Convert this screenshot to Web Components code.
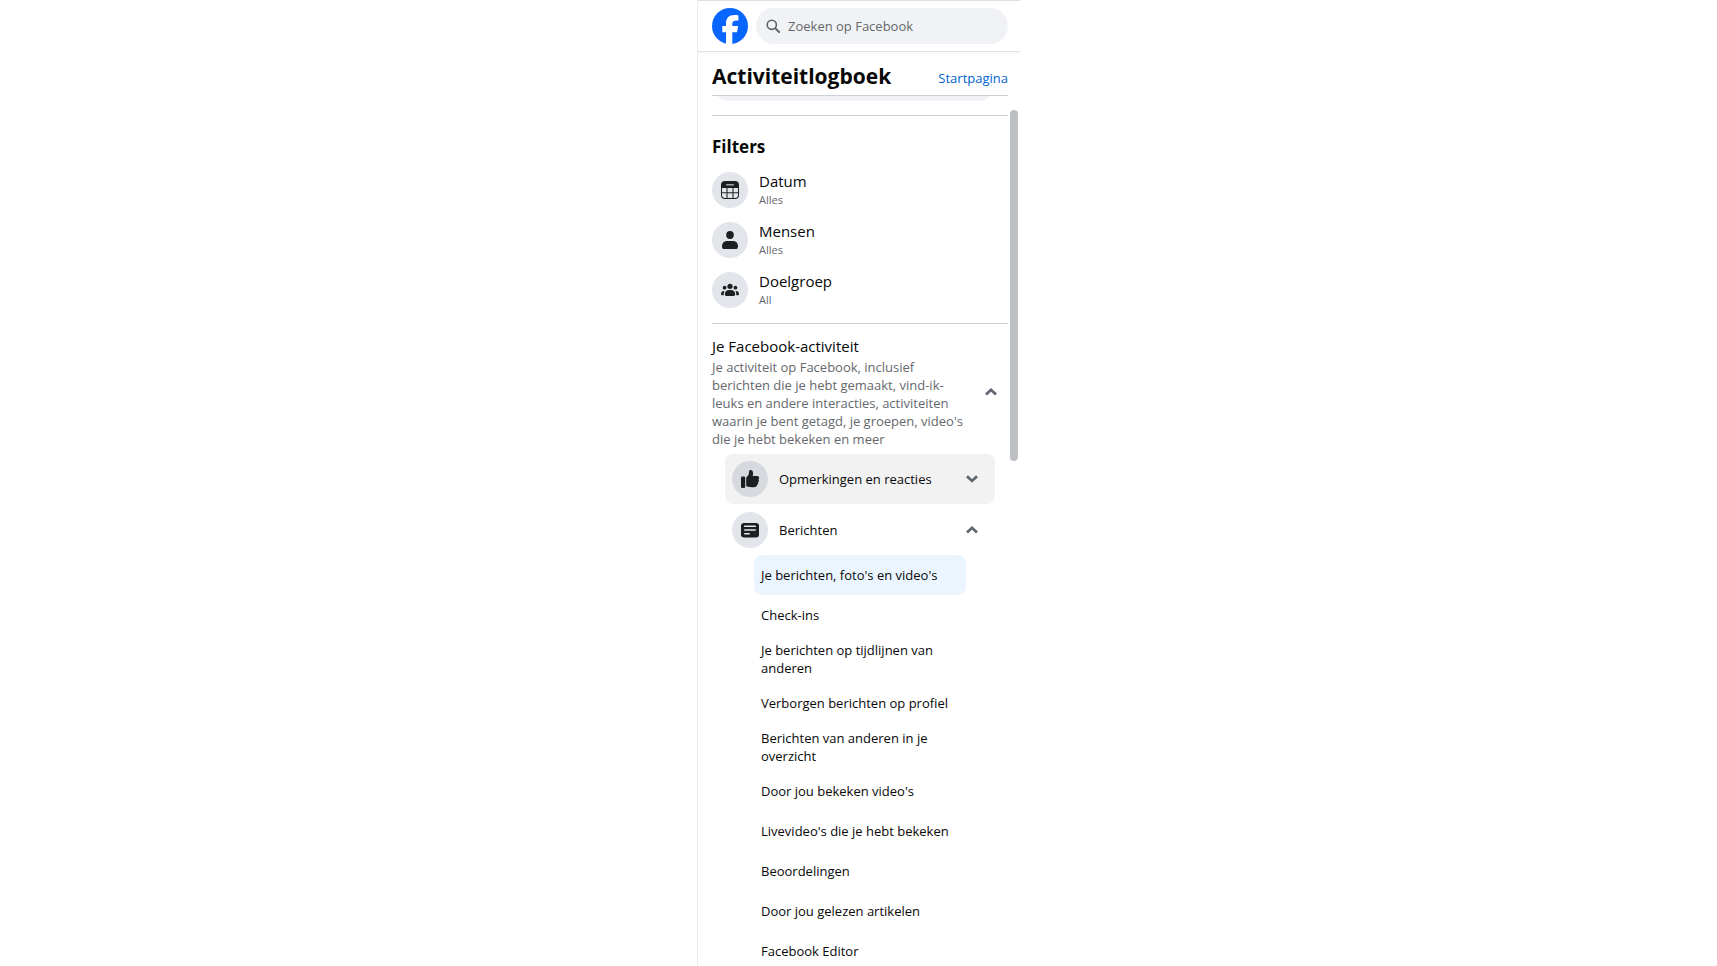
<!DOCTYPE html>
<html lang="nl">
<head>
<meta charset="utf-8">
<meta name="viewport" content="width=device-width, initial-scale=1">
<title>Activiteitlogboek</title>
<style>
  body {
    margin: 0;
    background: #fff;
    color: #080809;
    font-family: "Open Sans", "Noto Sans", sans-serif;
    font-size: 13px;
    line-height: 18px;
    --gray: #65686c;
    --line: #ced0d4;
    --circle: #e2e5e9;
    --icon: #1c1e21;
  }
</style>
</head>
<body>
<activity-app>
  <top-bar slot="top"></top-bar>
  <page-title slot="title" href="#start" link="Startpagina">Activiteitlogboek</page-title>

  <filter-group heading="Filters">
    <filter-row icon="calendar" value="Alles">Datum</filter-row>
    <filter-row icon="person" value="Alles">Mensen</filter-row>
    <filter-row icon="group" value="All">Doelgroep</filter-row>
  </filter-group>

  <activity-section heading="Je Facebook-activiteit">
    <span slot="description">Je activiteit op Facebook, inclusief berichten die je hebt gemaakt, vind-ik-leuks en andere interacties, activiteiten waarin je bent getagd, je groepen, video's die je hebt bekeken en meer</span>
    <category-item icon="like" label="Opmerkingen en reacties" hovered></category-item>
    <category-item icon="post" label="Berichten" open>
      <sub-item selected>Je berichten, foto's en video's</sub-item>
      <sub-item>Check-ins</sub-item>
      <sub-item>Je berichten op tijdlijnen van anderen</sub-item>
      <sub-item>Verborgen berichten op profiel</sub-item>
      <sub-item>Berichten van anderen in je overzicht</sub-item>
      <sub-item>Door jou bekeken video's</sub-item>
      <sub-item>Livevideo's die je hebt bekeken</sub-item>
      <sub-item>Beoordelingen</sub-item>
      <sub-item>Door jou gelezen artikelen</sub-item>
      <sub-item>Facebook Editor</sub-item>
    </category-item>
  </activity-section>
</activity-app>

<script>
const RESET = `
  * { box-sizing: border-box; }
  button {
    margin: 0;
    padding: 0;
    border: 0;
    background: none;
    color: inherit;
    font: inherit;
    text-align: left;
    cursor: pointer;
  }
  a { color: inherit; text-decoration: none; }
  h1, h2, h3, p { margin: 0; }
`;

const ICONS = {
  calendar: `
    <rect x="1" y="1" width="18" height="18" rx="4"/>
    <rect x="6" y="4" width="8" height="1.4" rx=".7" fill="#a5a8ac"/>
    <g fill="var(--circle)">
      <path d="M2 8h4.500v4.300H2z"/><path d="M7.500 8h5v4.300h-5z"/><path d="M13.500 8H18v4.300h-4.500z"/>
      <path d="M2 13.300h4.500V18H5a3 3 0 0 1-3-3z"/>
      <path d="M7.500 13.300h5V18h-5z"/>
      <path d="M13.500 13.300H18V15a3 3 0 0 1-3 3h-1.500z"/>
    </g>`,
  person: `
    <ellipse cx="10" cy="5" rx="3.8" ry="4.1"/>
    <path d="M7 11h6c3 0 5 2.200 5 5.400 0 1.600-.9 2.600-2.500 2.600h-11C2.900 19 2 18 2 16.400 2 13.200 4 11 7 11z"/>`,
  group: `
    <circle cx="10" cy="6.300" r="2.600"/>
    <circle cx="4.600" cy="7.700" r="1.900"/>
    <circle cx="15.400" cy="7.700" r="1.900"/>
    <path d="M9 10h2c2.600 0 4.200 1.800 4.200 4.200 0 1.200-.7 1.800-1.800 1.800H6.600c-1.100 0-1.800-.6-1.800-1.800C4.800 11.800 6.400 10 9 10z"/>
    <path d="M4.600 10.900C3.900 11.900 3.600 13 3.700 15.300H2.300c-.9 0-1.300-.6-1.300-1.500 0-1.800 1.400-3.100 3.600-2.900z"/>
    <path d="M15.400 10.900c.7 1 1 2.100.9 4.400h1.400c.9 0 1.300-.6 1.300-1.500 0-1.800-1.400-3.100-3.600-2.900z"/>`,
  like: `
    <rect x="1" y="7.500" width="4.200" height="11.500" rx="1.300"/>
    <path d="M6.200 17V9.400c0-.8.300-1.400.9-1.900C8.400 6.400 9 4.900 9 2.900 9 1.700 9.700 1 10.700 1c1.500 0 2.400 1.300 2.400 3.200 0 1.100-.2 2-.5 2.900H17c1.300 0 2.100.8 2.100 1.800 0 .7-.3 1.200-.8 1.500.4.400.6.800.6 1.300 0 .7-.4 1.300-1 1.600.2.300.3.600.3 1 0 .7-.4 1.300-1.100 1.500.1.900-.5 1.900-1.800 2.100-2.500.4-5.200.3-7.300-.2-1.100-.2-1.800-.5-1.800-.7z"/>`,
  post: `
    <rect x="1" y="3" width="18" height="14.500" rx="3"/>
    <g fill="var(--circle)">
      <rect x="4" y="5.600" width="12" height="1.500" rx=".7"/>
      <rect x="4" y="9.300" width="12" height="1.500" rx=".7"/>
      <rect x="4" y="13" width="6" height="1.500" rx=".7"/>
    </g>`
};

class IconCircle extends HTMLElement {
  constructor() {
    super();
    this.attachShadow({ mode: 'open' }).innerHTML = `
      <style>
        :host {
          display: flex;
          flex: none;
          align-items: center;
          justify-content: center;
          width: 36px;
          height: 36px;
          border-radius: 50%;
          background: var(--circle);
        }
        svg { width: 20px; height: 20px; fill: var(--icon); }
      </style>
      <svg viewBox="0 0 20 20" aria-hidden="true">${ICONS[this.getAttribute('name')] || ''}</svg>
    `;
  }
}

class ChevronIcon extends HTMLElement {
  constructor() {
    super();
    const d = this.hasAttribute('up') ? 'M1 8.500 6 3.800l5 4.700' : 'M1 3.200 6 7.900l5-4.700';
    this.attachShadow({ mode: 'open' }).innerHTML = `
      <style>
        :host { display: flex; flex: none; }
        svg { width: 12px; height: 12px; fill: none; stroke: #606770; stroke-width: 2.800; }
      </style>
      <svg viewBox="0 0 12 12" aria-hidden="true"><path d="${d}"/></svg>
    `;
  }
}

class TopBar extends HTMLElement {
  constructor() {
    super();
    this.attachShadow({ mode: 'open' }).innerHTML = `
      <style>
        ${RESET}
        :host {
          display: block;
          border-top: 1px solid #dddfe3;
          border-bottom: 1px solid #e2e3e5;
          box-shadow: 0 1px 2px rgba(0, 0, 0, .05);
        }
        header { display: flex; gap: 8px; padding: 7px 12px 7px 14px; }
        .logo { display: flex; flex: none; }
        .logo svg { width: 36px; height: 36px; }
        .search {
          display: flex;
          flex: 1;
          align-items: center;
          gap: 8px;
          min-width: 0;
          height: 36px;
          padding: 0 10px;
          border-radius: 18px;
          background: #f0f2f5;
        }
        .search svg {
          flex: none;
          width: 14px;
          height: 14px;
          fill: none;
          stroke: #606366;
          stroke-width: 1.600;
          stroke-linecap: round;
        }
        input {
          flex: 1;
          min-width: 0;
          padding: 0;
          border: 0;
          outline: 0;
          background: none;
          color: inherit;
          font: inherit;
        }
        input::placeholder { color: var(--gray); opacity: 1; }
      </style>
      <header>
        <a class="logo" href="#home" aria-label="Facebook">
          <svg viewBox="0 0 36 36" aria-hidden="true">
            <circle cx="18" cy="18" r="18" fill="#0866ff"/>
            <path fill="#fff" d="M14 36V24.300H10.300V18H14v-2.200C14 9.800 16.700 7 22.600 7c1.100 0 3 .2 3.800.4v5.200c-.4 0-1.200-.1-2.100-.1-2.900 0-4 1.100-4 3.900V18h5.800l-1 6.300h-4.800V36z"/>
          </svg>
        </a>
        <label class="search" for="q">
          <svg viewBox="0 0 14 14" aria-hidden="true">
            <circle cx="5.800" cy="5.800" r="4.600"/>
            <path d="m9.400 9.400 3.600 3.600" stroke-width="2"/>
          </svg>
          <input id="q" type="search" placeholder="Zoeken op Facebook" aria-label="Zoeken op Facebook">
        </label>
      </header>
    `;
  }
}

class PageTitle extends HTMLElement {
  constructor() {
    super();
    this.attachShadow({ mode: 'open' }).innerHTML = `
      <style>
        ${RESET}
        :host {
          display: flex;
          align-items: center;
          justify-content: space-between;
          margin: 0 12px 0 14px;
          padding: 10px 0 5px;
          border-bottom: 1px solid var(--line);
        }
        h1 { font-size: 21px; line-height: 28px; font-weight: 700; }
        a { padding-top: 4px; color: #0064d1; }
      </style>
      <h1><slot></slot></h1>
      <a href="${this.getAttribute('href')}">${this.getAttribute('link')}</a>
    `;
  }
}

class FilterRow extends HTMLElement {
  constructor() {
    super();
    this.attachShadow({ mode: 'open' }).innerHTML = `
      <style>
        ${RESET}
        :host { display: block; }
        button { display: flex; align-items: center; gap: 11px; width: 100%; height: 50px; }
        .name { display: block; font-size: 15px; line-height: 20px; }
        .value { display: block; font-size: 11px; line-height: 18px; color: var(--gray); }
      </style>
      <button type="button">
        <icon-circle name="${this.getAttribute('icon')}"></icon-circle>
        <span>
          <span class="name"><slot></slot></span>
          <span class="value">${this.getAttribute('value')}</span>
        </span>
      </button>
    `;
  }
}

class FilterGroup extends HTMLElement {
  constructor() {
    super();
    this.attachShadow({ mode: 'open' }).innerHTML = `
      <style>
        ${RESET}
        :host { display: block; padding: 20px 0 8px; border-bottom: 1px solid var(--line); }
        h2 { margin-bottom: 7px; font-size: 17px; line-height: 22px; font-weight: 700; }
      </style>
      <h2>${this.getAttribute('heading')}</h2>
      <slot></slot>
    `;
  }
}

class ActivitySection extends HTMLElement {
  constructor() {
    super();
    this.attachShadow({ mode: 'open' }).innerHTML = `
      <style>
        ${RESET}
        :host { display: block; }
        .head {
          display: flex;
          align-items: center;
          gap: 19px;
          width: 100%;
          padding: 12px 11px 6px 0;
        }
        .text { flex: 1; }
        .title { display: block; margin-bottom: 2px; font-size: 15px; line-height: 20px; font-weight: 500; }
        .description { display: block; color: var(--gray); }
        .items { display: flex; flex-direction: column; gap: 1px; padding: 0 13px; }
      </style>
      <button class="head" type="button" aria-expanded="true">
        <span class="text">
          <span class="title">${this.getAttribute('heading')}</span>
          <span class="description"><slot name="description"></slot></span>
        </span>
        <chevron-icon up></chevron-icon>
      </button>
      <div class="items"><slot></slot></div>
    `;
  }
}

class CategoryItem extends HTMLElement {
  constructor() {
    super();
    const open = this.hasAttribute('open');
    this.attachShadow({ mode: 'open' }).innerHTML = `
      <style>
        ${RESET}
        :host { display: block; }
        :host([hovered]) { --circle: #d6d9dd; }
        :host([hovered]) button { background: #f2f2f2; }
        button {
          display: flex;
          align-items: center;
          gap: 11px;
          width: 100%;
          height: 50px;
          padding: 0 17px 0 7px;
          border-radius: 8px;
          font-weight: 500;
        }
        .label { flex: 1; }
        .sub { padding: 0 29px; }
      </style>
      <button type="button" aria-expanded="${open}">
        <icon-circle name="${this.getAttribute('icon')}"></icon-circle>
        <span class="label">${this.getAttribute('label')}</span>
        <chevron-icon ${open ? 'up' : ''}></chevron-icon>
      </button>
      ${open ? '<div class="sub"><slot></slot></div>' : ''}
    `;
  }
}

class SubItem extends HTMLElement {
  constructor() {
    super();
    this.attachShadow({ mode: 'open' }).innerHTML = `
      <style>
        ${RESET}
        :host { display: block; }
        a {
          display: flex;
          align-items: center;
          min-height: 40px;
          padding: 6px 7px;
          border-radius: 8px;
          font-weight: 500;
        }
        :host([selected]) a { background: #ebf5ff; }
      </style>
      <a href="#item"><span><slot></slot></span></a>
    `;
  }
}

class ActivityApp extends HTMLElement {
  constructor() {
    super();
    this.attachShadow({ mode: 'open' }).innerHTML = `
      <style>
        ${RESET}
        :host {
          display: flex;
          flex-direction: column;
          box-sizing: border-box;
          width: 100%;
          max-width: 323px;
          height: 100vh;
          margin: 0 auto;
          border-left: 1px solid #ececee;
          overflow: hidden;
        }
        .scroller {
          display: flex;
          flex: 1;
          gap: 2px;
          min-height: 0;
          padding: 0 2px 0 14px;
          overflow: hidden;
        }
        .content { flex: 1; min-width: 0; }
        /* bottom edge of the search pill that is scrolled out of view */
        .scrolled { padding: 0 12px 14px 0; border-bottom: 1px solid var(--line); }
        .scrolled div { height: 36px; margin-top: -31px; border-radius: 18px; background: #f0f2f5; }
        .track { display: flex; flex: none; flex-direction: column; width: 8px; padding-top: 14px; }
        .thumb { height: 41%; border-radius: 4px; background: #bcc0c4; }
      </style>
      <slot name="top"></slot>
      <slot name="title"></slot>
      <div class="scroller">
        <main class="content">
          <div class="scrolled"><div></div></div>
          <slot></slot>
        </main>
        <div class="track"><div class="thumb"></div></div>
      </div>
    `;
  }
}

customElements.define('icon-circle', IconCircle);
customElements.define('chevron-icon', ChevronIcon);
customElements.define('top-bar', TopBar);
customElements.define('page-title', PageTitle);
customElements.define('filter-row', FilterRow);
customElements.define('filter-group', FilterGroup);
customElements.define('activity-section', ActivitySection);
customElements.define('category-item', CategoryItem);
customElements.define('sub-item', SubItem);
customElements.define('activity-app', ActivityApp);
</script>
</body>
</html>
